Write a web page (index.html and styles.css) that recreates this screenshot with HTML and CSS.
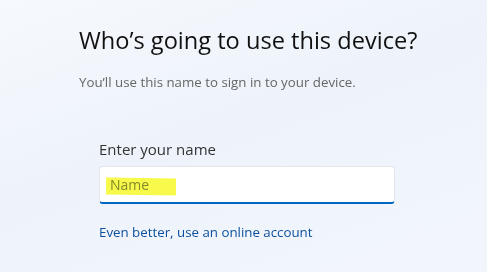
FILE: index.html
```html
<!DOCTYPE html>
<html lang="en">
<head>
    <meta charset="UTF-8">
    <title>Who's going to use this device?</title>
    <link rel="stylesheet" href="styles.css">
</head>
<body>
    <div class="oobe-page">
        <h1 class="oobe-title">Who’s going to use this device?</h1>
        <p class="oobe-subtitle">You’ll use this name to sign in to your device.</p>

        <form class="name-form" autocomplete="off">
            <label class="name-label" for="user-name">Enter your name</label>
            <div class="name-field">
                <input id="user-name" class="name-input" type="text" placeholder="Name">
                <span class="marker"></span>
            </div>
            <a href="#" class="online-link">Even better, use an online account</a>
        </form>
    </div>
</body>
</html>
```

FILE: styles.css
```css
body {
    margin: 0;
    height: 272px;
    overflow: hidden;
    font-family: "Open Sans", "Noto Sans", sans-serif;
    background: linear-gradient(160deg, #f6f9fd 0%, #eef3fb 45%, #f2f6fc 100%);
    color: #1a1a1a;
}

.oobe-page {
    padding: 24px 0 0 79px;
}

.oobe-title {
    margin: 0;
    font-size: 23.6px;
    font-weight: 400;
    line-height: 32px;
    color: #111;
}

.oobe-subtitle {
    margin: 17px 0 0 0;
    font-size: 13.3px;
    line-height: 18px;
    color: #666;
}

.name-form {
    display: flex;
    flex-direction: column;
    margin: 48px 0 0 20px;
    width: 296px;
}

.name-label {
    font-size: 15px;
    line-height: 20px;
    color: #333;
    margin-bottom: 7px;
}

.name-field {
    position: relative;
    height: 38px;
    background: #fff;
    border: 1px solid #e3e6ea;
    border-bottom: 2px solid #0067c0;
    border-radius: 4px;
    box-sizing: border-box;
}

.name-input {
    width: 100%;
    height: 100%;
    border: none;
    outline: none;
    background: transparent;
    padding: 0 10px;
    box-sizing: border-box;
    font-family: inherit;
    font-size: 14px;
    color: #111;
}

.name-input::placeholder {
    color: #8c8c8c;
}

.marker {
    position: absolute;
    left: 6px;
    top: 11px;
    width: 70px;
    height: 17px;
    background: #f7fa4a;
    mix-blend-mode: multiply;
    transform: skewY(1deg);
}

.online-link {
    margin-top: 19px;
    font-size: 13.3px;
    line-height: 18px;
    color: #0b4f9e;
    text-decoration: none;
}
```
